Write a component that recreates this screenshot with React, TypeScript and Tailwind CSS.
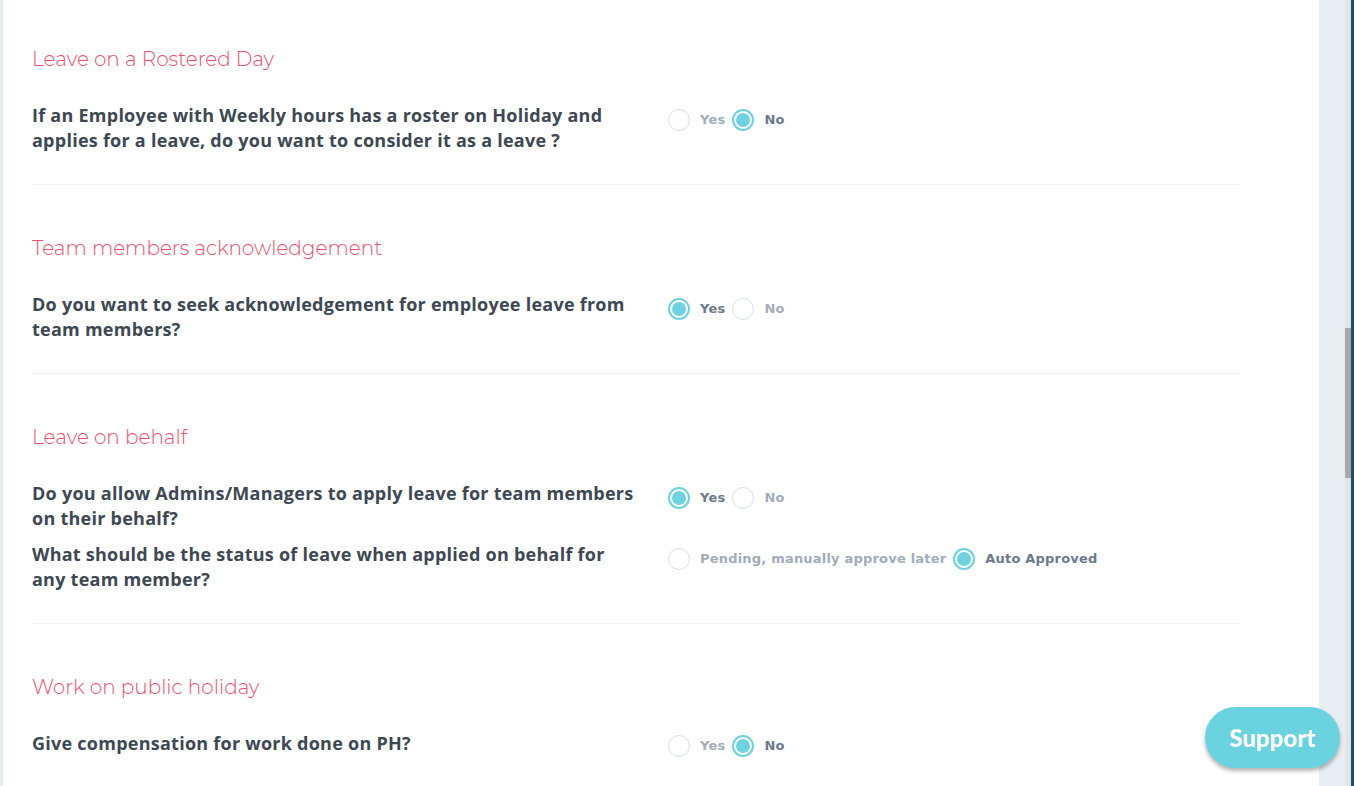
import React from 'react';

type Option = { label: string; checked: boolean };
type Question = { lines: string[]; options: Option[] };
type Section = { title: string; questions: Question[] };

const sections: Section[] = [
  {
    title: 'Leave on a Rostered Day',
    questions: [
      {
        lines: ['If an Employee with Weekly hours has a roster on Holiday and', 'applies for a leave, do you want to consider it as a leave ?'],
        options: [{ label: 'Yes', checked: false }, { label: 'No', checked: true }],
      },
    ],
  },
  {
    title: 'Team members acknowledgement',
    questions: [
      {
        lines: ['Do you want to seek acknowledgement for employee leave from', 'team members?'],
        options: [{ label: 'Yes', checked: true }, { label: 'No', checked: false }],
      },
    ],
  },
  {
    title: 'Leave on behalf',
    questions: [
      {
        lines: ['Do you allow Admins/Managers to apply leave for team members', 'on their behalf?'],
        options: [{ label: 'Yes', checked: true }, { label: 'No', checked: false }],
      },
      {
        lines: ['What should be the status of leave when applied on behalf for', 'any team member?'],
        options: [{ label: 'Pending, manually approve later', checked: false }, { label: 'Auto Approved', checked: true }],
      },
    ],
  },
  {
    title: 'Work on public holiday',
    questions: [
      {
        lines: ['Give compensation for work done on PH?'],
        options: [{ label: 'Yes', checked: false }, { label: 'No', checked: true }],
      },
    ],
  },
];

function Radio({ option }: { option: Option }) {
  return (
    <label className="flex items-center">
      {option.checked ? (
        <span className="w-[22px] h-[22px] rounded-full border-2 border-[#6dd3e0] flex items-center justify-center shrink-0">
          <span className="w-[14px] h-[14px] rounded-full bg-[#6dd3e0]" />
        </span>
      ) : (
        <span className="w-[22px] h-[22px] rounded-full border-[1.5px] border-[#d3e2e8] shrink-0" />
      )}
      <span
        className={
          'ml-[10px] mr-[7px] text-[13px] tracking-[0.2px] font-bold font-["DejaVu_Sans",sans-serif] ' +
          (option.checked ? 'text-[#6c7a8d]' : 'text-[#a3adb8]')
        }
      >
        {option.label}
      </span>
    </label>
  );
}

export default function App() {
  return (
    <div className="h-[786px] w-full flex overflow-hidden bg-[#e6edf1]">
      <div className="w-[3px] shrink-0" />
      <main className="flex-1 bg-white pl-[29px] pr-[79px] pt-[47px]">
        {sections.map((s, i) => (
          <section key={s.title} className={i > 0 ? 'border-t border-[#eef2f5] pt-[51px] pb-[31px]' : 'pb-[31px]'}>
            <h2 className="text-[20px] leading-[24px] font-light text-[#f24c6b] font-['Montserrat','Open_Sans',sans-serif]">
              {s.title}
            </h2>
            <div className="mt-[32px] flex flex-col gap-[11px]">
              {s.questions.map((q, j) => (
                <div key={j} className="flex">
                  <p className="w-[636px] shrink-0 text-[18px] leading-[25px] font-bold tracking-[0.25px] text-[#3d4852] font-['Open_Sans',sans-serif]">
                    {q.lines.map((l, k) => (
                      <span key={k} className="block">{l}</span>
                    ))}
                  </p>
                  <div className={'flex items-start ' + (q.lines.length > 1 ? 'pt-[6px]' : 'pt-[4px]')}>
                    {q.options.map(o => (
                      <Radio key={o.label} option={o} />
                    ))}
                  </div>
                </div>
              ))}
            </div>
          </section>
        ))}
      </main>
      <div className="w-[26px] shrink-0 bg-[#e8eef1]" />
      <div className="w-[6px] shrink-0 bg-[#e1e4e6] flex flex-col">
        <div className="h-[328px]" />
        <div className="h-[150px] bg-[#a8a8a8]" />
      </div>
      <div className="w-[3px] shrink-0 bg-[#1f4f63]" />

      {/* support chat button */}
      <button className="fixed left-[1205px] top-[707px] w-[135px] h-[61px] rounded-full bg-[#6bd3df] text-white text-[24px] font-black font-['Lato',sans-serif] shadow-[0_3px_4px_rgba(0,0,0,0.3)]">
        Support
      </button>
    </div>
  );
}
